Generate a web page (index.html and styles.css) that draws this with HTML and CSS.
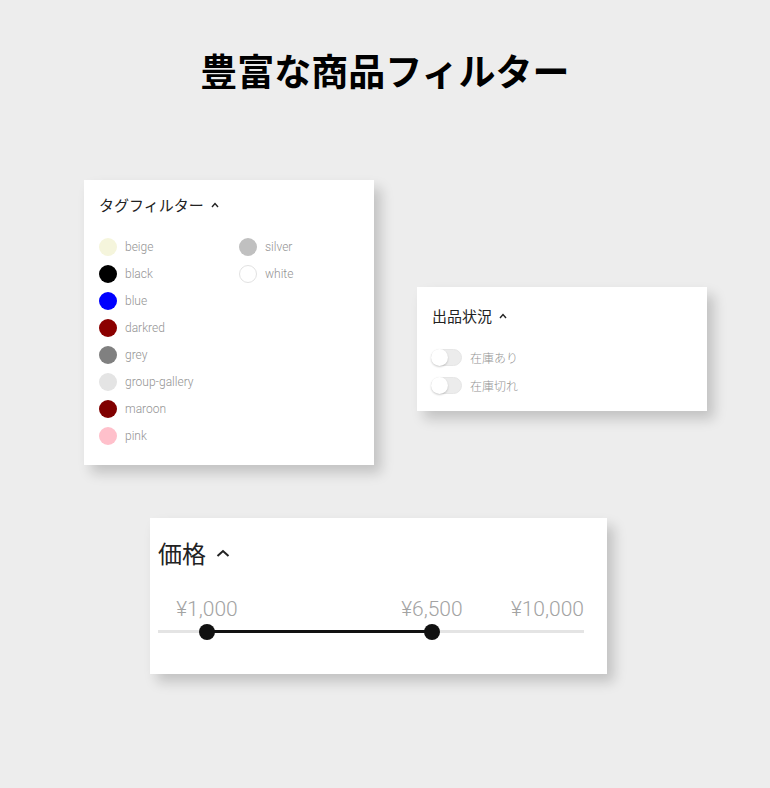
FILE: index.html
```html
<!DOCTYPE html>
<html lang="ja">
<head>
    <meta charset="UTF-8">
    <meta name="viewport" content="width=device-width, initial-scale=1.0">
    <title>豊富な商品フィルター</title>
    <link rel="stylesheet" href="styles.css">
</head>
<body>
    <h1 class="page-title">豊富な商品フィルター</h1>

    <div class="row">
        <div class="card tag-card">
            <div class="card-title">タグフィルター
                <svg class="chevron" width="8" height="6" viewBox="0 0 8 6"><polyline points="1,5 4,1.5 7,5" fill="none" stroke="#222" stroke-width="1.4"/></svg>
            </div>
            <ul class="tags">
                <li><span class="dot" style="background:#f5f5dc"></span>beige</li>
                <li><span class="dot" style="background:#000"></span>black</li>
                <li><span class="dot" style="background:#0000ff"></span>blue</li>
                <li><span class="dot" style="background:#8b0000"></span>darkred</li>
                <li><span class="dot" style="background:#808080"></span>grey</li>
                <li><span class="dot" style="background:#e4e4e4"></span>group-gallery</li>
                <li><span class="dot" style="background:#800000"></span>maroon</li>
                <li><span class="dot" style="background:#ffc0cb"></span>pink</li>
                <li><span class="dot" style="background:#c0c0c0"></span>silver</li>
                <li><span class="dot dot-white"></span>white</li>
            </ul>
        </div>

        <div class="card stock-card">
            <div class="card-title">出品状況
                <svg class="chevron" width="8" height="6" viewBox="0 0 8 6"><polyline points="1,5 4,1.5 7,5" fill="none" stroke="#222" stroke-width="1.4"/></svg>
            </div>
            <ul class="toggles">
                <li><span class="toggle"><span class="knob"></span></span>在庫あり</li>
                <li><span class="toggle"><span class="knob"></span></span>在庫切れ</li>
            </ul>
        </div>
    </div>

    <div class="card price-card">
        <div class="card-title price-title">価格
            <svg class="chevron" width="14" height="8" viewBox="0 0 14 8"><polyline points="1.5,7 7,2 12.5,7" fill="none" stroke="#222" stroke-width="2"/></svg>
        </div>
        <div class="slider">
            <div class="price-labels">
                <span class="price-label" style="left:11.5%">¥1,000</span>
                <span class="price-label" style="left:64.3%">¥6,500</span>
                <span class="price-label max">¥10,000</span>
            </div>
            <div class="track">
                <div class="range" style="left:11.5%; width:52.8%"></div>
                <span class="thumb" style="left:11.5%"></span>
                <span class="thumb" style="left:64.3%"></span>
            </div>
        </div>
    </div>
</body>
</html>
```

FILE: styles.css
```css
body { margin: 0; padding-bottom: 80px; background: #ededed; font-family: Roboto, "Noto Sans CJK JP", sans-serif; color: #222; }
ul { list-style: none; margin: 0; padding: 0; }

.page-title { margin: 0; padding-top: 48px; font-family: "Noto Sans CJK JP", sans-serif; font-size: 37px; line-height: 44px; font-weight: 700; color: #000; text-align: center; }

.row { display: flex; align-items: flex-start; gap: 43px; margin: 88px 0 0 84px; }

.card { background: #fff; box-shadow: 7px 8px 12px rgba(0,0,0,0.18); box-sizing: border-box; }
.card-title { display: flex; align-items: center; gap: 7px; font-family: "Noto Sans CJK JP", sans-serif; font-size: 15px; line-height: 20px; color: #222; }
.chevron { display: block; }

.tag-card { width: 290px; padding: 15px 15px 16px 15px; }
.tags { display: grid; grid-auto-flow: column; grid-template-rows: repeat(8, 27px); grid-template-columns: 140px 1fr; margin-top: 18px; }
.tags li { display: flex; align-items: center; gap: 8px; font-size: 12px; font-weight: 300; color: #939393; }
.dot { width: 18px; height: 18px; border-radius: 50%; flex-shrink: 0; box-sizing: border-box; }
.dot-white { background: #fff; border: 1px solid #e2e2e2; }

.stock-card { width: 290px; margin-top: 107px; padding: 19px 14px 12px 15px; }
.toggles { margin-top: 17px; }
.toggles li { display: flex; align-items: center; gap: 8px; height: 28px; font-family: "Noto Sans CJK JP", sans-serif; font-size: 12px; font-weight: 300; color: #939393; }
.toggle { position: relative; width: 31px; height: 17px; border-radius: 9px; background: #ececec; box-sizing: border-box; border: 1px solid #e6e6e6; margin-left: -1px; }
.knob { position: absolute; left: -1px; top: -1px; width: 17px; height: 17px; border-radius: 50%; background: #fff; box-shadow: 0 1px 2px rgba(0,0,0,0.2); }

.price-card { width: 457px; margin: 53px 0 0 150px; padding: 20px 23px 41px 8px; }
.price-title { font-size: 24px; line-height: 30px; gap: 10px; }
.slider { margin-top: 29px; }
.price-labels { position: relative; height: 24px; }
.price-label { position: absolute; top: 0; transform: translateX(-50%); font-size: 21px; line-height: 24px; font-weight: 300; color: #a3a3a3; white-space: nowrap; }
.price-label.max { left: auto; right: 0; transform: none; }
.track { position: relative; height: 3px; margin-top: 9px; background: #e4e4e4; }
.range { position: absolute; top: 0; height: 3px; background: #111; }
.thumb { position: absolute; top: 50%; width: 16px; height: 16px; border-radius: 50%; background: #111; transform: translate(-50%, -50%); }
```
